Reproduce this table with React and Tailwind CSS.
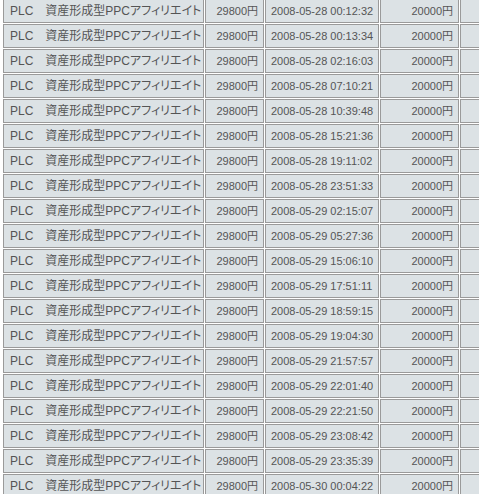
import React from 'react';

const dates = [
  '2008-05-28 00:12:32',
  '2008-05-28 00:13:34',
  '2008-05-28 02:16:03',
  '2008-05-28 07:10:21',
  '2008-05-28 10:39:48',
  '2008-05-28 15:21:36',
  '2008-05-28 19:11:02',
  '2008-05-28 23:51:33',
  '2008-05-29 02:15:07',
  '2008-05-29 05:27:36',
  '2008-05-29 15:06:10',
  '2008-05-29 17:51:11',
  '2008-05-29 18:59:15',
  '2008-05-29 19:04:30',
  '2008-05-29 21:57:57',
  '2008-05-29 22:01:40',
  '2008-05-29 22:21:50',
  '2008-05-29 23:08:42',
  '2008-05-29 23:35:39',
  '2008-05-30 00:04:22',
];

const cell = 'h-[24px] border border-[#9a9a9a] bg-[#dce2e5] p-0 whitespace-nowrap overflow-hidden';
const jp = "font-['Liberation_Sans','Noto_Sans_CJK_JP',sans-serif]";

export default function App() {
  return (
    <div className="w-[479px] h-[494px] overflow-hidden bg-white">
      <div className="-mt-[2px] pl-[2px]">
        <table className="w-[499px] table-fixed border-separate border-spacing-[1px] text-[#555] text-[11px] leading-none">
          <colgroup>
            <col className="w-[201px]" />
            <col className="w-[59px]" />
            <col className="w-[114px]" />
            <col className="w-[79px]" />
            <col className="w-[40px]" />
          </colgroup>
          <tbody>
            {dates.map((d) => (
              <tr key={d}>
                <td className={`${cell} ${jp} pl-[6px] text-[12px] [font-feature-settings:'palt']`}>
                  PLC　資産形成型PPCアフィリエイト
                </td>
                <td className={`${cell} ${jp} pr-[5px] text-right`}>29800円</td>
                <td className={`${cell} pl-[5px] font-['Liberation_Sans',sans-serif]`}>{d}</td>
                <td className={`${cell} ${jp} pr-[5px] text-right`}>20000円</td>
                <td className={cell}></td>
              </tr>
            ))}
          </tbody>
        </table>
      </div>
    </div>
  );
}
